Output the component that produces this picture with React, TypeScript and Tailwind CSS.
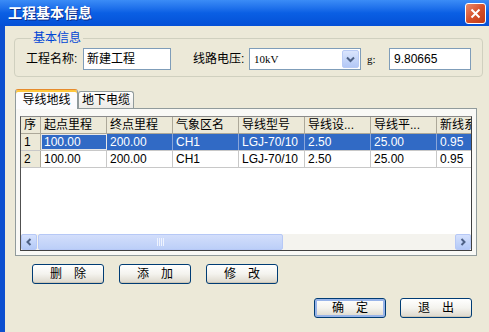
import React from 'react';

interface Row {
  id: string;
  start: string;
  end: string;
  zone: string;
  type: string;
  a: string;
  b: string;
  c: string;
}

const columns = [
  { title: '起点里程', w: 66 },
  { title: '终点里程', w: 66 },
  { title: '气象区名', w: 66 },
  { title: '导线型号', w: 66 },
  { title: '导线设...', w: 66 },
  { title: '导线平...', w: 66 },
  { title: '新线系数', w: 40 },
];

const rows: Row[] = [
  { id: '1', start: '100.00', end: '200.00', zone: 'CH1', type: 'LGJ-70/10', a: '2.50', b: '25.00', c: '0.95' },
  { id: '2', start: '100.00', end: '200.00', zone: 'CH1', type: 'LGJ-70/10', a: '2.50', b: '25.00', c: '0.95' },
];

const XpButton: React.FC<{ label: string; focused?: boolean }> = ({ label, focused }) => (
  <div
    className={`flex h-[20px] w-[72px] items-center justify-center rounded-[3px] border border-[#003c74] bg-gradient-to-b from-white via-[#f4f3ee] to-[#dcd7cb] text-[12px] leading-none text-black ${
      focused ? 'shadow-[inset_0_0_0_2px_#98b4e9]' : 'shadow-[inset_0_-1px_0_#cdc6b6]'
    }`}
  >
    {label}
  </div>
);

const ArrowBtn: React.FC<{ dir: 'left' | 'right' }> = ({ dir }) => (
  <div className="flex h-[16px] w-[16px] shrink-0 items-center justify-center rounded-[2px] border border-[#b6c8f6] bg-gradient-to-b from-[#d5e1fd] to-[#b3c9f7]">
    <svg width="8" height="8" viewBox="0 0 8 8">
      <path
        d={dir === 'left' ? 'M5.5 1 L2.5 4 L5.5 7' : 'M2.5 1 L5.5 4 L2.5 7'}
        fill="none"
        stroke="#4d6185"
        strokeWidth="2"
      />
    </svg>
  </div>
);

export default function App() {
  return (
    <div
      className="flex h-[332px] w-[489px] flex-col overflow-hidden bg-[#ece9d8] text-[12px] text-black"
      style={{ fontFamily: '"Liberation Sans", "Noto Sans CJK SC", sans-serif' }}
    >
      {/* title bar */}
      <div className="flex h-[26px] shrink-0 items-center justify-between bg-gradient-to-b from-[#3b8cf6] via-[#0a5fe4] to-[#0550d6] pl-[8px] pr-[3px]">
        <span className="text-[14px] font-bold leading-none text-white [text-shadow:1px_1px_#0c2c8a]">
          工程基本信息
        </span>
        <div className="flex h-[21px] w-[21px] items-center justify-center rounded-[3px] border border-white bg-gradient-to-br from-[#e88a6c] via-[#d6502a] to-[#c03a15]">
          <svg width="11" height="11" viewBox="0 0 11 11">
            <path d="M1.5 1.5 L9.5 9.5 M9.5 1.5 L1.5 9.5" stroke="white" strokeWidth="2" />
          </svg>
        </div>
      </div>

      {/* body */}
      <div className="flex flex-1 flex-col border-l-[5px] border-l-[#0b4fd0] pl-[9px] pr-[12px]">
        {/* group box */}
        <fieldset className="mt-[5px] rounded-[4px] border border-[#d0d0bf] px-[11px] pb-[6px] pt-[3px]">
          <legend className="ml-[5px] px-[2px] text-[12px] leading-[14px] text-[#0046d5]">基本信息</legend>
          <div className="flex h-[22px] items-center">
            <span className="w-[57px] shrink-0">工程名称:</span>
            <div className="flex h-[22px] w-[88px] items-center border border-[#7f9db9] bg-white pl-[3px]">新建工程</div>
            <span className="ml-[22px] w-[56px] shrink-0">线路电压:</span>
            <div className="flex h-[22px] w-[112px] items-center justify-between border border-[#7f9db9] bg-white pl-[4px] pr-[1px]">
              <span className="text-[11px]" style={{ fontFamily: '"Liberation Serif", serif' }}>10kV</span>
              <div className="flex h-[18px] w-[17px] items-center justify-center rounded-[2px] border border-[#b9cbf5] bg-gradient-to-b from-[#dae5fd] to-[#b3c8f6]">
                <svg width="9" height="7" viewBox="0 0 9 7">
                  <path d="M1 1.5 L4.5 5 L8 1.5" fill="none" stroke="#4d6185" strokeWidth="2" />
                </svg>
              </div>
            </div>
            <span className="ml-[6px] w-[22px] shrink-0 text-[11px]" style={{ fontFamily: '"Liberation Serif", serif' }}>g:</span>
            <div className="flex h-[22px] w-[82px] items-center border border-[#7f9db9] bg-white pl-[4px]">9.80665</div>
          </div>
        </fieldset>

        {/* tabs */}
        <div className="ml-[1px] mt-[12px] flex h-[19px] items-end">
          <div className="relative z-10 -mb-[1px] flex h-[20px] w-[63px] items-center justify-center rounded-t-[3px] border border-b-0 border-[#919b9c] border-t-[#e68b2c] bg-[#fcfcfe] shadow-[inset_0_2px_0_#ffc73c]">
            导线地线
          </div>
          <div className="flex h-[17px] w-[56px] items-center justify-center rounded-t-[3px] border border-b-0 border-[#919b9c] bg-gradient-to-b from-white to-[#ecebe6]">
            地下电缆
          </div>
        </div>
        <div className="ml-[1px] flex h-[148px] flex-col border border-[#919b9c] bg-[#f9f9f6] px-[4px] pt-[7px]">
          {/* grid */}
          <div className="flex h-[135px] flex-col overflow-hidden border border-[#404040] border-l-[#505050] border-t-[#8a8a8a] bg-white">
            <div className="flex h-[17px] shrink-0 border-b border-[#aca899] bg-[#ece9d8]">
              <div className="flex w-[20px] shrink-0 items-center border-r border-[#aca899] pl-[3px]">序</div>
              {columns.map((c) => (
                <div
                  key={c.title}
                  className="flex shrink-0 items-center overflow-hidden whitespace-nowrap border-r border-[#aca899] pl-[3px]"
                  style={{ width: c.w }}
                >
                  {c.title}
                </div>
              ))}
            </div>
            {rows.map((r, i) => {
              const sel = i === 0;
              const vals = [r.start, r.end, r.zone, r.type, r.a, r.b, r.c];
              return (
                <div key={r.id} className="flex h-[17px] shrink-0 border-b border-[#c8c8c8]">
                  <div className="flex w-[20px] shrink-0 items-center border-r border-[#aca899] bg-[#ece9d8] pl-[3px]">{r.id}</div>
                  {vals.map((v, j) => (
                    <div
                      key={j}
                      className={`flex shrink-0 items-center overflow-hidden whitespace-nowrap border-r pl-[3px] ${
                        sel ? 'border-[#8aa6da] bg-[#316ac5] text-white' : 'border-[#c8c8c8]'
                      } ${sel && j === 0 ? 'outline outline-1 -outline-offset-1 outline-[#e8e8e8]' : ''}`}
                      style={{ width: columns[j].w }}
                    >
                      {v}
                    </div>
                  ))}
                </div>
              );
            })}
            <div className="flex-1" />
            {/* horizontal scrollbar */}
            <div className="flex h-[16px] shrink-0 bg-[#f4f3ee]">
              <ArrowBtn dir="left" />
              <div className="ml-[1px] flex h-[16px] w-[245px] items-center justify-center rounded-[2px] border border-[#b6c8f6] bg-gradient-to-b from-[#d3defb] to-[#bccff8]">
                <svg width="8" height="8" viewBox="0 0 8 8">
                  <path d="M0.5 0 V8 M2.5 0 V8 M4.5 0 V8 M6.5 0 V8" stroke="#eef3fe" strokeWidth="1" />
                </svg>
              </div>
              <div className="flex-1" />
              <ArrowBtn dir="right" />
            </div>
          </div>
        </div>

        {/* action buttons */}
        <div className="ml-[18px] mt-[8px] flex gap-[15px]">
          <XpButton label="删　除" />
          <XpButton label="添　加" />
          <XpButton label="修　改" />
        </div>
        <div className="mt-[14px] flex justify-end gap-[14px] pr-[5px]">
          <XpButton label="确　定" focused />
          <XpButton label="退　出" />
        </div>
      </div>
    </div>
  );
}
